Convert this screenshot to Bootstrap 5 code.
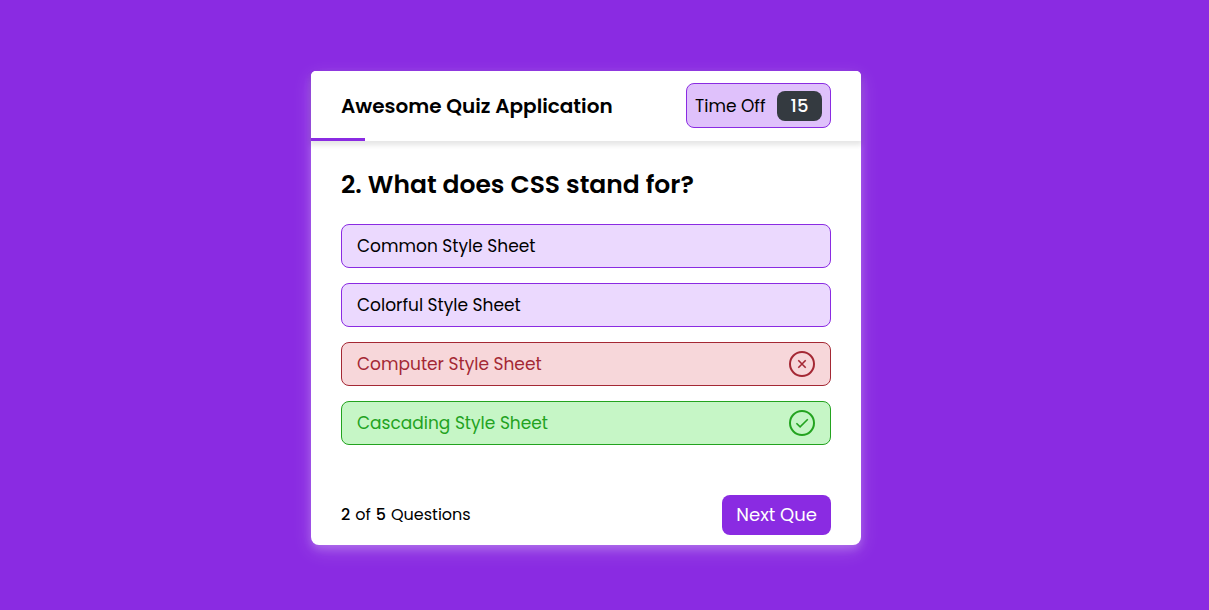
<!DOCTYPE html>
<html lang="en">
<head>
<meta charset="utf-8">
<meta name="viewport" content="width=device-width, initial-scale=1">
<title>Awesome Quiz Application</title>
<link href="https://cdn.jsdelivr.net/npm/bootstrap@5.3.0/dist/css/bootstrap.min.css" rel="stylesheet">
<style>
  body { background: #8a2be2; color: #000; font-family: Poppins, Inter, sans-serif; }
  .stage { padding: 18px 48px 12px 11px; }
  .quiz-box {
    width: 100%; max-width: 550px; background: #fff; border-radius: 5px 5px 8px 8px;
    box-shadow: 0 4px 8px rgba(255,255,255,.2), 0 6px 20px rgba(255,255,255,.19);
  }
  .quiz-header {
    min-height: 70px; padding: 12px 30px 13px; background: #fff;
    border-radius: 5px 5px 0 0; box-shadow: 0 3px 5px 1px rgba(0,0,0,.1);
  }
  .quiz-title { font-size: 20px; line-height: 30px; font-weight: 600; }
  .timer { width: 145px; height: 45px; padding: 0 8px; background: #dfc1fb; border: 1px solid #8a2be2; border-radius: 8px; font-size: 17px; line-height: 26px; }
  .timer-sec { width: 45px; height: 30px; line-height: 30px; font-size: 18px; font-weight: 500; background: #343a40; border-radius: 8px; }
  .time-line { height: 3px; background: #8a2be2; }
  .quiz-body { padding: 25px 30px 40px; }
  .question { font-size: 25px; line-height: 38px; font-weight: 600; margin-bottom: 20px; }
  .options { gap: 15px; }
  .option { height: 44px; padding: 0 15px; font-size: 17px; line-height: 26px; text-align: left; color: #000; background: #ebd9fe; border: 1px solid #8a2be2; border-radius: 8px; }
  .option.wrong { color: #a42834; background: #f7d7da; border-color: #a42834; }
  .option.right { color: #23a31f; background: #c6f6c6; border-color: #23a31f; }
  .option svg { width: 26px; height: 26px; fill: none; stroke: currentColor; }
  .quiz-footer { padding: 10px 30px; }
  .tally { gap: 5px; font-size: 16px; }
  .tally b { font-weight: 500; }
  .next-btn { height: 40px; padding: 0 14px; font-size: 18px; line-height: 26px; color: #fff; background: #8a2be2; border: 0; border-radius: 8px; }
</style>
</head>
<body>
<div class="stage min-vh-100 d-flex align-items-center justify-content-center">
  <main class="quiz-box">
    <header class="quiz-header d-flex align-items-center justify-content-between position-relative">
      <h1 class="quiz-title mb-0">Awesome Quiz Application</h1>
      <div class="timer d-flex align-items-center justify-content-between">
        <span>Time Off</span>
        <span class="timer-sec text-white text-center">15</span>
      </div>
      <div class="time-line position-absolute bottom-0 start-0" style="width: 54px"></div>
    </header>
    <section class="quiz-body">
      <h2 class="question">2. What does CSS stand for?</h2>
      <div class="options d-flex flex-column">
        <button type="button" class="option d-flex align-items-center justify-content-between">Common Style Sheet</button>
        <button type="button" class="option d-flex align-items-center justify-content-between">Colorful Style Sheet</button>
        <button type="button" class="option wrong d-flex align-items-center justify-content-between">Computer Style Sheet
          <svg viewBox="0 0 26 26" aria-hidden="true"><circle cx="13" cy="13" r="12" stroke-width="2"/><path d="M9.3 9.3l7.4 7.4M16.7 9.3l-7.4 7.4" stroke-width="1.6"/></svg>
        </button>
        <button type="button" class="option right d-flex align-items-center justify-content-between">Cascading Style Sheet
          <svg viewBox="0 0 26 26" aria-hidden="true"><circle cx="13" cy="13" r="12" stroke-width="2"/><path d="M7.4 13.2l3.7 3.7 7.7-7.7" stroke-width="1.6"/></svg>
        </button>
      </div>
    </section>
    <footer class="quiz-footer d-flex align-items-center justify-content-between">
      <div class="tally d-flex"><b>2</b> <span>of</span> <b>5</b> <span>Questions</span></div>
      <button type="button" class="next-btn">Next Que</button>
    </footer>
  </main>
</div>
<script src="https://cdn.jsdelivr.net/npm/bootstrap@5.3.0/dist/js/bootstrap.bundle.min.js"></script>
</body>
</html>
